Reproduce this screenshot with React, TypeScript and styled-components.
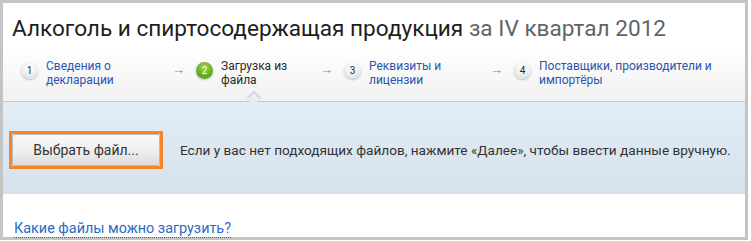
import styled, { createGlobalStyle, css } from "styled-components";

const GlobalStyle = createGlobalStyle`
    html, body {
        margin: 0;
        padding: 0;
        background: #ffffff;
    }
    body {
        font-family: Roboto, "Liberation Sans", Arial, sans-serif;
        color: #333333;
    }
`;

const Frame = styled.div`
    width: 748px;
    height: 240px;
    box-sizing: border-box;
    border: 3px solid #c4c4c4;
    display: flex;
    flex-direction: column;
    background: #ffffff;
`;

const Header = styled.div`
    height: 99px;
    box-sizing: border-box;
    padding: 12px 0 0 9px;
    border-bottom: 1px solid #c9c9c9;
    background: linear-gradient(to bottom, #ffffff 45%, #f1f1f1 100%);
`;

const Title = styled.h1`
    margin: 0;
    font-size: 22.6px;
    line-height: 28px;
    font-weight: 400;
    color: #1e1e1e;
`;

const Period = styled.span`
    color: #5f6468;
`;

const Steps = styled.div`
    display: flex;
    margin-top: 16px;
    padding-left: 9px;
`;

const Step = styled.div<{ $width?: number; $active?: boolean }>`
    position: relative;
    display: flex;
    align-items: flex-start;
    flex: 0 0 ${(p) => (p.$width ? `${p.$width}px` : "auto")};
    ${(p) =>
        p.$active &&
        css`
            &::after {
                content: "";
                position: absolute;
                left: 53px;
                top: 34px;
                width: 9px;
                height: 9px;
                background: #e3edf6;
                border-top: 1px solid #c9c9c9;
                border-left: 1px solid #c9c9c9;
                transform: rotate(45deg);
            }
        `}
`;

const Circle = styled.span<{ $active?: boolean }>`
    flex: 0 0 17px;
    width: 17px;
    height: 17px;
    margin-top: 3px;
    border-radius: 50%;
    display: flex;
    align-items: center;
    justify-content: center;
    font-size: 10px;
    color: ${(p) => (p.$active ? "#ffffff" : "#2a2a2a")};
    background: ${(p) =>
        p.$active
            ? "radial-gradient(circle at 50% 30%, #9ed04a 0%, #6aae24 55%, #4c8d14 100%)"
            : "radial-gradient(circle at 50% 30%, #ffffff 0%, #f0f0f0 50%, #d4d4d4 100%)"};
    box-shadow: 0 1px 2px rgba(0, 0, 0, 0.25);
`;

const StepLabel = styled.span<{ $link?: boolean }>`
    margin-left: 8px;
    font-size: 12px;
    line-height: 14px;
    color: ${(p) => (p.$link ? "#2a56ad" : "#2a2a2a")};
`;

const Arrow = styled.span`
    margin-left: auto;
    margin-right: 11px;
    margin-top: 3px;
    font-size: 13px;
    color: #8a8a8a;
`;

const Panel = styled.div`
    height: 92px;
    box-sizing: border-box;
    padding: 4px 6px 0;
    display: flex;
    align-items: center;
    gap: 17px;
    background: linear-gradient(to bottom, #e3edf6 0%, #d5e1ec 100%);
`;

const ButtonFrame = styled.div`
    border: 3px solid #f5842a;
    display: flex;
`;

const Button = styled.button`
    width: 148px;
    height: 32px;
    border: 1px solid #bdbdbd;
    border-radius: 2px;
    background: linear-gradient(to bottom, #f9f9f9 0%, #ececec 60%, #dcdcdc 100%);
    font-family: inherit;
    font-size: 14px;
    color: #333333;
    cursor: pointer;
`;

const Hint = styled.span`
    font-size: 13.6px;
    color: #333333;
`;

const Footer = styled.div`
    flex: 1;
    padding: 24px 0 0 11px;
`;

const HelpLink = styled.a`
    font-size: 14.4px;
    color: #2a6bc4;
    text-decoration: none;
    border-bottom: 1px dotted #2a6bc4;
    cursor: pointer;
`;

const steps = [
    { num: 1, lines: ["Сведения о", "декларации"], width: 175 },
    { num: 2, lines: ["Загрузка из", "файла"], width: 148, active: true },
    { num: 3, lines: ["Реквизиты и", "лицензии"], width: 170 },
    { num: 4, lines: ["Поставщики, производители и", "импортёры"] },
];

export default function App() {
    return (
        <>
            <GlobalStyle />
            <Frame>
                <Header>
                    <Title>
                        Алкоголь и спиртосодержащая продукция <Period>за IV квартал 2012</Period>
                    </Title>
                    <Steps>
                        {steps.map((s, i) => (
                            <Step key={s.num} $width={s.width} $active={s.active}>
                                <Circle $active={s.active}>{s.num}</Circle>
                                <StepLabel $link={!s.active}>
                                    {s.lines[0]}
                                    <br />
                                    {s.lines[1]}
                                </StepLabel>
                                {i < steps.length - 1 && <Arrow>→</Arrow>}
                            </Step>
                        ))}
                    </Steps>
                </Header>
                <Panel>
                    <ButtonFrame>
                        <Button>Выбрать файл...</Button>
                    </ButtonFrame>
                    <Hint>
                        Если у вас нет подходящих файлов, нажмите «Далее», чтобы ввести данные вручную.
                    </Hint>
                </Panel>
                <Footer>
                    <HelpLink>Какие файлы можно загрузить?</HelpLink>
                </Footer>
            </Frame>
        </>
    );
}
